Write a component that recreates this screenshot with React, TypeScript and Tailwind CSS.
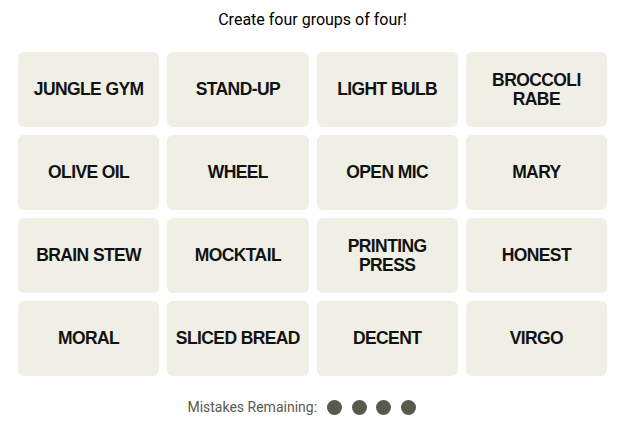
const words = [
  ['JUNGLE GYM'], ['STAND-UP'], ['LIGHT BULB'], ['BROCCOLI', 'RABE'],
  ['OLIVE OIL'], ['WHEEL'], ['OPEN MIC'], ['MARY'],
  ['BRAIN STEW'], ['MOCKTAIL'], ['PRINTING', 'PRESS'], ['HONEST'],
  ['MORAL'], ['SLICED BREAD'], ['DECENT'], ['VIRGO'],
]

function Tile({ lines }: { lines: string[] }) {
  return (
    <button className="flex h-[75px] flex-col items-center justify-center rounded-md bg-[#efefe6] text-center font-['Liberation_Sans',sans-serif] text-[17.5px] leading-[19px] font-bold tracking-[-0.6px] whitespace-nowrap text-[#121212]">
      {lines.map((l) => (
        <span key={l}>{l}</span>
      ))}
    </button>
  )
}

export default function App() {
  return (
    <div className="h-[423px] w-[619px] bg-white font-['Roboto',sans-serif]">
      <div className="ml-[18px] flex w-[589px] flex-col">
        <p className="pt-2 text-center text-[16px] leading-6 text-black">Create four groups of four!</p>
        <div className="mt-5 grid grid-cols-4 gap-2">
          {words.map((w) => (
            <Tile key={w.join(' ')} lines={w} />
          ))}
        </div>
        <div className="mt-[19px] flex h-6 items-center justify-center pr-[22px] text-[14px] text-[#5a594e]">
          <span>Mistakes Remaining:</span>
          <div className="ml-[10px] flex gap-[9.5px]">
            <span className="h-[15px] w-[15px] rounded-full bg-[#5a594e]" />
            <span className="h-[15px] w-[15px] rounded-full bg-[#5a594e]" />
            <span className="h-[15px] w-[15px] rounded-full bg-[#5a594e]" />
            <span className="h-[15px] w-[15px] rounded-full bg-[#5a594e]" />
          </div>
        </div>
      </div>
    </div>
  )
}
